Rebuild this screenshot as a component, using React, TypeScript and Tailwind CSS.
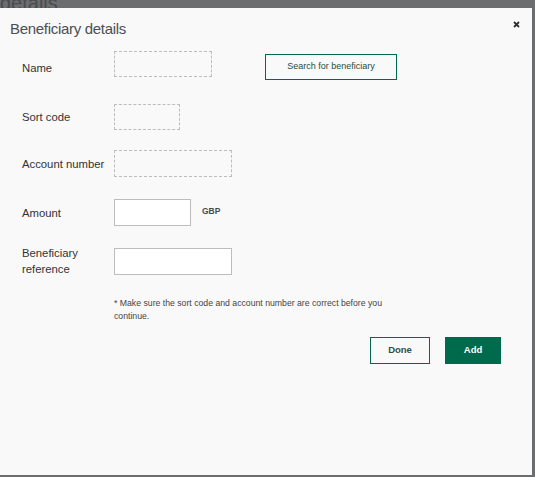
import React from 'react';

const font = { fontFamily: '"Liberation Sans", Arial, sans-serif' };

const FormRow = ({ label, className, children }: { label: React.ReactNode; className?: string; children: React.ReactNode }) => (
  <div className={`flex ${className ?? 'items-center'}`}>
    <div className="w-[92px] shrink-0 text-[11.3px] leading-[16px] text-[#333333]">{label}</div>
    {children}
  </div>
);

const DashedBox = ({ width, height = 'h-[26px]' }: { width: string; height?: string }) => (
  <div className={`${width} ${height} border border-dashed border-[#bdbdbd]`} />
);

const TextInput = ({ width }: { width: string }) => (
  <input type="text" className={`${width} h-[27px] border border-[#bdbdbd] bg-white outline-none`} />
);

export default function App() {
  return (
    <div className="flex h-[477px] w-[535px] flex-col overflow-hidden bg-[#6c6d6f] pb-[2px] pr-[3px]" style={font}>
      {/* backdrop page heading, mostly hidden behind the dialog */}
      <div className="h-[8px] shrink-0 overflow-hidden">
        <div className="-mt-[7px] text-[20px] leading-[20px] text-[#4a4b4d]">details</div>
      </div>

      <div className="flex-1 bg-[#f9f9f9]">
        <div className="flex items-start justify-between pl-[10px] pr-[12px] pt-[11px]">
          <h2 className="text-[15px] leading-[20px] tracking-[-0.3px] text-[#4d4f53]">Beneficiary details</h2>
          <button className="mt-[2px] p-0" aria-label="Close">
            <svg width="7" height="7" viewBox="0 0 7 7">
              <path d="M1 1 L6 6 M6 1 L1 6" stroke="#2f2f2f" strokeWidth="1.8" />
            </svg>
          </button>
        </div>

        <div className="pl-[22px]">
          <div className="mt-[12px] flex items-start">
            <div className="mt-[9px] w-[92px] shrink-0 text-[11.3px] leading-[16px] text-[#333333]">Name</div>
            <DashedBox width="w-[98px]" />
            <button className="ml-[53px] mt-[3px] h-[26px] w-[132px] border border-[#006a4d] text-[9px] text-[#1f4d40]">
              Search for beneficiary
            </button>
          </div>

          <FormRow label="Sort code" className="mt-[24px] items-center">
            <DashedBox width="w-[66px]" />
          </FormRow>

          <FormRow label="Account number" className="mt-[20px] items-center">
            <DashedBox width="w-[118px]" height="h-[27px]" />
          </FormRow>

          <FormRow label="Amount" className="mt-[22px] items-center">
            <TextInput width="w-[77px]" />
            <span className="-mt-[3px] ml-[11px] text-[8.5px] font-bold text-[#4a4a4a]">GBP</span>
          </FormRow>

          <FormRow
            label={
              <>
                Beneficiary
                <br />
                reference
              </>
            }
            className="mt-[19px] items-center"
          >
            <TextInput width="w-[118px]" />
          </FormRow>

          <p className="ml-[92px] mt-[20px] w-[285px] text-[8.7px] leading-[13px] text-[#444444]">
            * Make sure the sort code and account number are correct before you continue.
          </p>

          <div className="mt-[14px] flex justify-end gap-[15px] pr-[31px]">
            <button className="h-[27px] w-[60px] border border-[#006a4d] text-[9.5px] font-bold text-[#2e4f47]">Done</button>
            <button className="h-[27px] w-[56px] bg-[#006a4d] text-[9.5px] font-bold text-white">Add</button>
          </div>
        </div>
      </div>
    </div>
  );
}
